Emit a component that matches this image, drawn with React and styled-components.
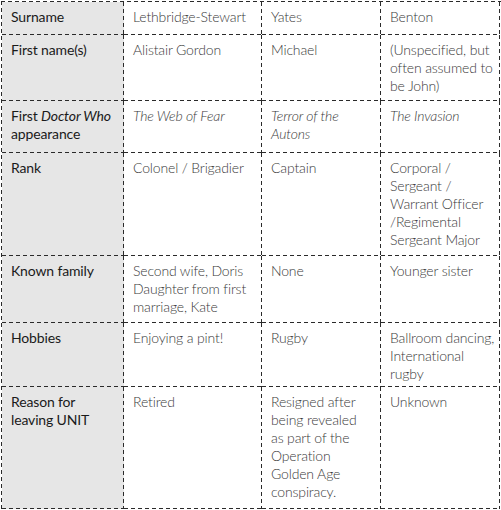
import styled, { createGlobalStyle } from "styled-components";

const GlobalStyle = createGlobalStyle`
  body {
    margin: 0;
    background: #fff;
  }
`;

const rows = [
  {
    label: "Surname",
    values: ["Lethbridge-Stewart", "Yates", "Benton"],
    height: 33,
  },
  {
    label: "First name(s)",
    values: [
      "Alistair Gordon",
      "Michael",
      <>
        (Unspecified, but
        <br />
        often assumed to
        <br />
        be John)
      </>,
    ],
    height: 66,
  },
  {
    label: (
      <>
        First <i>Doctor Who</i> appearance
      </>
    ),
    values: [
      "The Web of Fear",
      <>
        Terror of the
        <br />
        Autons
      </>,
      "The Invasion",
    ],
    italic: true,
    height: 52,
  },
  {
    label: "Rank",
    values: [
      "Colonel / Brigadier",
      "Captain",
      <>
        Corporal /<br />
        Sergeant /<br />
        Warrant Officer
        <br />
        /Regimental
        <br />
        Sergeant Major
      </>,
    ],
    height: 103,
  },
  {
    label: "Known family",
    values: [
      <>
        Second wife, Doris
        <br />
        Daughter from first
        <br />
        marriage, Kate
      </>,
      "None",
      "Younger sister",
    ],
    height: 67,
  },
  {
    label: "Hobbies",
    values: [
      "Enjoying a pint!",
      "Rugby",
      <>
        Ballroom dancing,
        <br />
        International
        <br />
        rugby
      </>,
    ],
    height: 64,
  },
  {
    label: (
      <>
        Reason for
        <br />
        leaving UNIT
      </>
    ),
    values: [
      "Retired",
      <>
        Resigned after
        <br />
        being revealed
        <br />
        as part of the
        <br />
        Operation
        <br />
        Golden Age
        <br />
        conspiracy.
      </>,
      "Unknown",
    ],
    height: 122,
  },
];

function App() {
  return (
    <>
      <GlobalStyle />
      <Table $rows={rows.map((r) => r.height + "px").join(" ")}>
        {rows.map((row, i) => (
          <Row key={i}>
            <Label>{row.label}</Label>
            {row.values.map((v, j) => (
              <Cell key={j} $italic={row.italic}>
                {v}
              </Cell>
            ))}
          </Row>
        ))}
      </Table>
    </>
  );
}

export default App;

const dashV = "repeating-linear-gradient(to bottom, #2a2a2a 0 4px, transparent 4px 7px)";
const dashH = "repeating-linear-gradient(to right, #2a2a2a 0 4px, transparent 4px 7px)";

const Table = styled.div`
  display: grid;
  grid-template-columns: 122px 138px 119px 119px;
  grid-template-rows: ${(p) => p.$rows};
  width: 499px;
  padding: 1px 0 0 1px;
  margin: 1px 0 0 1px;
  background-image: ${dashV}, ${dashH};
  background-size: 1px 100%, 100% 1px;
  background-position: left top, left top;
  background-repeat: no-repeat;
  font-family: Lato, "Open Sans", sans-serif;
  font-size: 14px;
  line-height: 18px;
  letter-spacing: -0.15px;
`;

const Row = styled.div`
  display: contents;
`;

const Cell = styled.div`
  box-sizing: border-box;
  padding: 6px 0 0 9px;
  white-space: nowrap;
  background-color: ${(p) => p.$bg || "transparent"};
  background-image: ${dashV}, ${dashH};
  background-size: 1px 100%, 100% 1px;
  background-position: right top, left bottom;
  background-repeat: no-repeat;
  color: #3a3a3a;
  font-weight: 300;
  font-style: ${(p) => (p.$italic ? "italic" : "normal")};
`;

const Label = styled(Cell).attrs({ $bg: "#e6e6e6" })`
  color: #1a1a1a;
  font-weight: 400;
  font-style: normal;
  white-space: normal;
`;
